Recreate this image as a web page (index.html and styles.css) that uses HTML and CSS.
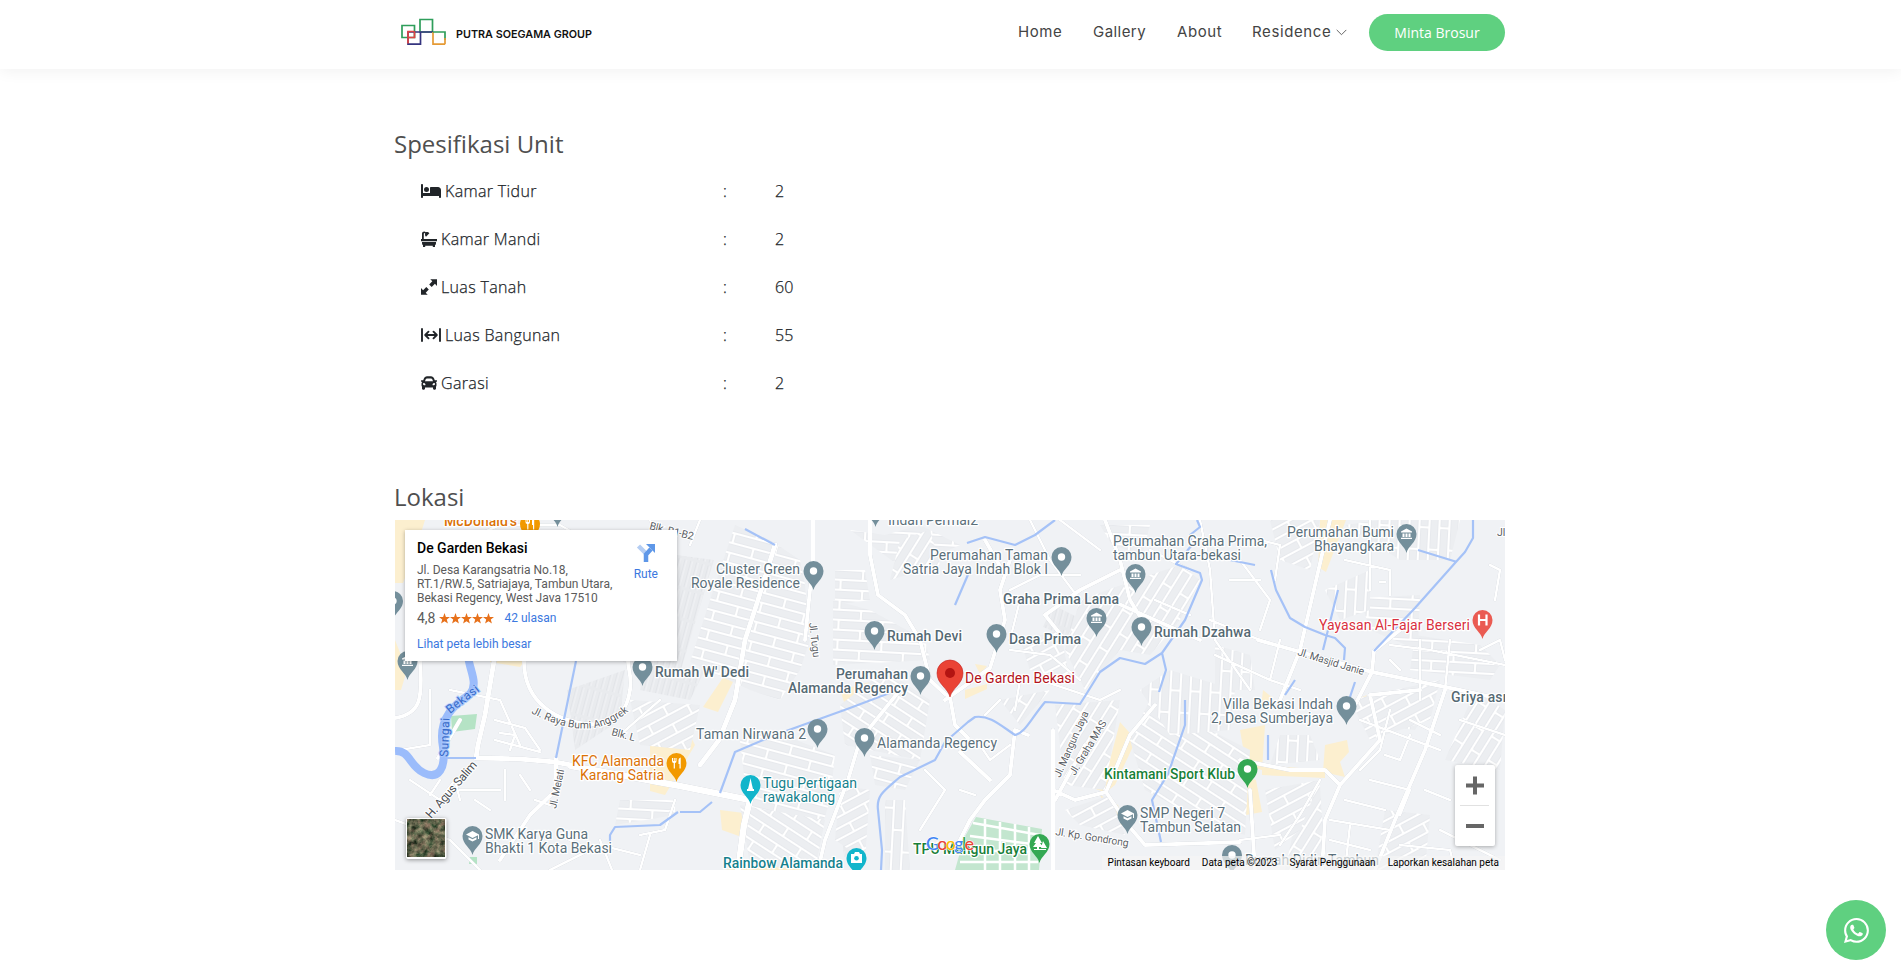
FILE: index.html
```html
<!DOCTYPE html>
<html lang="id">
<head>
<meta charset="utf-8">
<title>Putra Soegama Group</title>
<link rel="stylesheet" href="styles.css">
</head>
<body>
<header class="header">
  <div class="container header-row">
    <a class="logo" href="#">
      <svg width="200" height="40" viewBox="395 12 200 40" fill="none" stroke-width="1.7">
        <path stroke="#2f9e5b" d="M402 25.500h12.500v12H402zM420 19.500h12.500V32H420z"/>
        <path stroke="#35347f" d="M408 32h12.500v12.200H408zM420 32h13"/>
        <path stroke="#e04444" d="M414.500 31.500H408v12M408 37.500h6.500v-6"/>
        <path stroke="#e59a35" d="M433 32v12.200h12"/>
        <path stroke="#2f9e5b" d="M433 32h12v8"/>
        <path stroke="#e59a35" d="M445 38v6.200"/>
        <text class="logo-text" x="456" y="38" textLength="136" lengthAdjust="spacingAndGlyphs">PUTRA SOEGAMA GROUP</text>
      </svg>
    </a>
    <nav class="nav">
      <a href="#" class="nav-home">Home</a>
      <a href="#" class="nav-gallery">Gallery</a>
      <a href="#" class="nav-about">About</a>
      <a href="#" class="nav-res">Residence <svg width="11" height="7" viewBox="0 0 11 7"><path d="M.7.900 5.500 5.700 10.300.900" fill="none" stroke="#666" stroke-width="1"/></svg></a>
      <a href="#" class="button">Minta Brosur</a>
    </nav>
  </div>
</header>
<main class="container">
  <section class="spec">
    <h4>Spesifikasi Unit</h4>
    <div class="row"><span class="name"><svg width="20" height="16" viewBox="0 0 640 512"><path d="M32 32c17.700 0 32 14.300 32 32V320H288V160c0-17.700 14.300-32 32-32H544c53 0 96 43 96 96V448c0 17.700-14.300 32-32 32s-32-14.300-32-32V416H64v32c0 17.700-14.300 32-32 32s-32-14.300-32-32V64C0 46.300 14.300 32 32 32zm144 96a80 80 0 1 1 0 160 80 80 0 1 1 0-160z"/></svg>Kamar Tidur</span><span>:</span><span>2</span></div>
    <div class="row"><span class="name"><svg width="16" height="16" viewBox="0 0 16 16"><path d="M1 8V2.600C1 .400 3.700-.200 4.800 1.200 6.200.700 7.600 1.200 8.400 2.300L5 5.700C4 4.900 3.800 3.700 4.200 2.800 3.800 1.800 2.800 2 2.800 2.800V8zM0 8h16v2.300H0zM1 11h14v1.200c0 .9-.4 1.500-1 2V16h-2.200v-1.200H4.200V16H2v-1.800c-.6-.5-1-1.100-1-2z"/></svg>Kamar Mandi</span><span>:</span><span>2</span></div>
    <div class="row"><span class="name"><svg width="16" height="16" viewBox="0 0 16 16"><path d="M9.300.200H16v6.700l-2.100-2.100-3.200 3.100-2.500-2.500 3.100-3.200zM6.700 15.800H0V9.100l2.100 2.100 3.200-3.100 2.500 2.500-3.100 3.200z"/></svg>Luas Tanah</span><span>:</span><span>60</span></div>
    <div class="row"><span class="name"><svg width="20" height="16" viewBox="0 0 20 16"><path d="M1 2v12M19 2v12M4.500 8h11M7.500 4.700 4.200 8l3.300 3.300M12.500 4.700 15.800 8l-3.300 3.300" fill="none" stroke="#212529" stroke-width="1.900" stroke-linecap="round" stroke-linejoin="round"/></svg>Luas Bangunan</span><span>:</span><span>55</span></div>
    <div class="row"><span class="name"><svg width="16" height="16" viewBox="0 28 512 456" preserveAspectRatio="none"><path d="M499.990 176h-59.870l-16.640-41.600C406.380 91.630 365.570 64 319.500 64h-127c-46.060 0-86.880 27.630-103.990 70.400L71.870 176H12.010C4.200 176-1.530 183.340.370 190.910l6 24C7.700 220.250 12.500 224 18.010 224h20.070C24.650 235.730 16 252.780 16 272v48c0 16.120 6.160 30.670 16 41.930V416c0 17.670 14.330 32 32 32h32c17.670 0 32-14.330 32-32v-32h256v32c0 17.670 14.330 32 32 32h32c17.670 0 32-14.330 32-32v-54.070c9.840-11.250 16-25.800 16-41.930v-48c0-19.220-8.650-36.270-22.070-48H494c5.510 0 10.310-3.750 11.640-9.090l6-24c1.890-7.570-3.840-14.910-11.650-14.910zm-352.060-17.830c7.290-18.220 24.940-30.170 44.570-30.170h127c19.630 0 37.280 11.950 44.570 30.170L384 208H128l19.930-49.830zM96 319.800c-19.200 0-32-12.760-32-31.900S76.800 256 96 256s48 28.710 48 47.850-28.800 15.950-48 15.950zm320 0c-19.200 0-48 3.190-48-15.950S396.800 256 416 256s32 12.760 32 31.900-12.800 31.900-32 31.900z"/></svg>Garasi</span><span>:</span><span>2</span></div>
  </section>
  <section class="location">
    <h4>Lokasi</h4>
    <div class="map">
      <svg class="map-canvas" width="1110" height="350" viewBox="395 520 1110 350">
        <defs>
          <g id="tile">
            <rect width="44" height="20" fill="#eceef1"/>
            <path d="M0 5H44M0 15H44M12 5V15M34 -5V5M34 15V25" stroke="#dcdfe4" stroke-width="3.600" fill="none"/>
            <path d="M0 5H44M0 15H44M12 5V15M34 -5V5M34 15V25" stroke="#fff" stroke-width="2.600" fill="none"/>
          </g>
          <pattern id="p15" width="44" height="20" patternUnits="userSpaceOnUse" patternTransform="rotate(15)"><use href="#tile"/></pattern>
          <pattern id="p0" width="44" height="20" patternUnits="userSpaceOnUse" patternTransform="rotate(3)"><use href="#tile"/></pattern>
          <pattern id="p30" width="44" height="20" patternUnits="userSpaceOnUse" patternTransform="rotate(33)"><use href="#tile"/></pattern>
          <pattern id="p60" width="44" height="20" patternUnits="userSpaceOnUse" patternTransform="rotate(-58)"><use href="#tile"/></pattern>
          <pattern id="p90" width="44" height="20" patternUnits="userSpaceOnUse" patternTransform="rotate(93)"><use href="#tile"/></pattern>
          <pattern id="p25" width="44" height="20" patternUnits="userSpaceOnUse" patternTransform="rotate(-28)"><use href="#tile"/></pattern>
          <pattern id="dense" width="30" height="6" patternUnits="userSpaceOnUse" patternTransform="rotate(-75)"><rect width="30" height="6" fill="#e9ebee"/><path d="M0 3H27" stroke="#dcdee2"/><path d="M0 4H27" stroke="#f5f6f8"/></pattern>
          <path id="drop" d="M0 19C-1.500 12-10 8.500-10 0A10 10 0 1 1 10 0C10 8.500 1.500 12 0 19Z"/>
          <g id="pin"><use href="#drop"/><circle r="3.700" fill="#fff"/></g>
          <g id="museum"><use href="#drop"/><path d="M-5.500-2.500 0-5.500 5.500-2.500V-1.500H-5.500ZM-4-.5H-2V3H-4ZM-1-.5H1V3H-1ZM2-.5H4V3H2ZM-5.500 3.700H5.500V5H-5.500Z" fill="#fff"/></g>
          <g id="school"><use href="#drop"/><path d="M-6.500-1.500 0-5 6.500-1.500V3H5.500V-.8L0 2ZM-4 1.200 0 3.300 4 1.200V3.500L0 5.500-4 3.500Z" fill="#fff"/></g>
          <g id="food"><use href="#drop"/><path d="M-4.500-5V-2Q-4.500 0-2.800 0V5.500H-1.600V0Q0 0 0-2V-5H-1V-2H-1.800V-5H-2.700V-2H-3.500V-5ZM2 5.500V-3Q2-5 4.200-5.500V5.500H3V1H2Z" fill="#fff"/></g>
          <filter id="terrain" x="0" y="0" width="1" height="1" color-interpolation-filters="sRGB"><feTurbulence type="fractalNoise" baseFrequency=".17" numOctaves="4" seed="8"/><feColorMatrix values=".9 0 0 0 -.06 .65 .2 0 0 -.03 .6 .1 0 0 -.05 0 0 0 0 1"/></filter>
        </defs>
        <rect x="395" y="520" width="1110" height="350" fill="#f0f2f5"/>

        <!-- parks and commercial blocks -->
        <path fill="#b5e3c5" d="M451 716 477 714 475 729 452 732ZM470 857h7v7h-8z"/>
        <path fill="#c3e6cf" d="M976 817 1042 829 1039 870H955L964 838Z"/>
        <path fill="#fcefcf" d="M395 520h30l-12 38-10 25H395ZM395 640l12 30-6 20h-6ZM490 655h40l-10 12-30-5ZM720 810 760 815 778 870H755L750 840 722 830ZM725 870 800 850V870ZM650 745l35-20 10 20-30 50-15-4ZM1120 722 1136 740 1115 785 1105 793 1095 788 1110 760ZM1100 795 1118 805 1125 825H1114ZM1085 760 1104 765 1098 790 1080 780ZM1325 745 1347 740 1349 752 1340 762 1345 777 1323 772ZM1240 730 1265 725 1262 770 1246 765ZM1236 775 1256 780 1262 812 1246 815ZM1262 765 1325 770V778L1262 775ZM1320 520h26l-20 52-8-5ZM1263 690l10 8-12 10ZM1355 700l12-5-8 15ZM840 690 885 678 890 688 845 705ZM965 690l22-6v5l-22 10ZM735 660l8 2-25 50-15-5ZM975 664l12 2-7 8Z"/>

        <!-- residential areas -->
        <path fill="url(#dense)" d="M677 555 714 560 690 640 678 680 620 661V530L677 540ZM640 665 705 670 690 700 640 690ZM567 690 625 670 620 720 575 750ZM1053 605l24 12-10 20-24-10ZM840 815l17-3 5 40-18 5Z"/>
        <path fill="url(#p15)" d="M735 525 770 540 800 560 805 585 810 640 800 670 780 700 750 690 690 662 710 600ZM740 740 770 730 835 755 830 800 815 850 750 830ZM870 755 920 760 905 790 875 785Z"/>
        <path fill="url(#p30)" d="M885 670 930 700 920 760 845 745 840 705ZM740 805 825 820 815 870 750 865ZM1130 740 1150 700 1250 750 1245 835 1200 820 1145 790Z"/>
        <path fill="url(#p0)" d="M620 800H675V815L615 825ZM835 570H865L870 600 835 605Z"/>
        <path fill="none" stroke="#fff" stroke-width="2.500" d="M973 823 1040 835M970 836 1040 845M965 850 1030 852M960 862H1038M985 819V870M1000 822V870M1015 824V870M1029 827V870"/>
        <path fill="url(#p0)" d="M833 600 870 610 925 640 930 660 833 665ZM850 530 885 535 920 525 960 545 905 570ZM1360 598 1420 595 1418 650 1370 630ZM1415 635 1480 645 1500 665 1490 680 1410 670ZM1100 525h50l-8 30-30-10Z"/>
        <path fill="url(#p60)" d="M1080 600 1135 580 1180 565 1200 580 1180 620 1150 655 1120 650 1085 690 1065 650ZM1055 705 1120 700 1105 790 1065 785ZM1300 800 1320 785 1325 870H1285ZM1475 690 1505 710 1500 770 1445 760ZM900 540 930 530 940 565 890 580ZM1000 700 1050 690 1020 725Z"/>
        <path fill="url(#p90)" d="M1140 690 1170 670 1235 690 1230 730 1170 735ZM885 800h20l5 70H885ZM1280 735h30l10 25-50 5ZM1325 590 1370 570 1370 610 1340 620ZM1215 645 1250 655 1255 690 1215 690ZM1345 525 1380 520H1460L1450 560H1400ZM1375 700 1430 705 1415 730 1380 725Z"/>
        <path fill="url(#p25)" d="M630 700 700 705 690 750 640 745ZM840 785 870 790 865 860 835 840ZM1385 810 1430 815 1425 870H1375ZM1265 790 1320 780 1300 830 1275 850ZM1350 700 1440 680 1430 720 1370 740ZM1065 810 1110 795 1125 835 1080 825ZM1270 520h50l-10 50-30-10ZM1020 640 1060 630 1070 680 1030 670Z"/>

        <g class="roads">
          <path stroke-width="5" d="M494 661 L485 715 478 745 476 758 520 759 555 762 571 765 M775 545 L758 600 745 640 735 700 719 740 700 765"/>
          <path stroke-width="6.500" d="M571 766 L620 775 680 786 750 800 M750 800 L744 825 738 870"/>
          <path stroke-width="4" d="M395 718C420 714 423 700 420 661 M524 661C524 705 560 722 590 724S628 705 630 690 628 670 628 661 M556 758V790L530 815 500 860 M438 758 460 720 M813 520V560L808 610 805 640 M870 520V555L878 595 905 615 920 640 930 680 945 694 950 697 955 725 968 738 M945 700 990 668 1005 620 1000 590 1010 560 M985 540 1005 575 M1028 735 1015 730 1010 775 985 800 970 820 955 850M960 752 990 780 M1053 730V870M1053 790 1075 800 1106 792 1130 735 1155 705M1106 792 1128 825 1145 845 1240 842 M1085 745 1055 800 M1330 520 1300 650 1280 700M1258 640 1372 672 1460 690 1505 700M1372 672 1355 705 M1445 690 1425 750 1395 820 1375 870 M1374 651 1372 672M1374 651 1400 630M1240 760 1290 770 1325 770 1340 785 1325 820 1322 870M1340 785 1380 740 1370 695 1420 690 M1250 790 1255 870 M900 690 860 740 848 780 825 840 818 870 M1105 520 1120 560 1130 600 1145 625M1120 570 1080 590 1045 615 1065 640M1110 600 1200 640"/>
          <path stroke-width="2.600" d="M400 750 430 745 430 690M410 780 440 800 455 780 460 800M460 790 500 790 M500 700 520 745M495 740 540 752 M450 690 500 700M1000 700 985 715 M395 820 450 840 480 870M1040 680 1100 700 1120 690 M1010 650 1050 655 1080 680M1010 590 1040 575 1080 575M1020 600 1010 640M1030 520 1050 560 1080 600M1060 520 1100 550M1200 520 1210 570 1215 640 1250 690M1240 560 1270 600 1260 630M1210 620 1260 640M1230 580 1260 580M1260 540 1280 545 1275 580M1280 640 1270 680 1300 690M1215 655 1270 680M1370 520V590M1345 560 1390 570V595M1380 582H1385M1490 565 1500 570 1495 600M1390 645 1430 650 1505 665M1420 640V700M1400 670 1390 660 M1450 640 1445 690M1480 650 1500 640 1505 660M1360 720 1440 750 M1390 710 1380 750 1360 770M1370 780 1410 790 1400 815M1425 790 1450 800M1410 735 1400 760 1385 755M1330 840 1370 850M1330 820 1390 830M1280 845 1300 815 1320 780M1240 840 1280 835M960 790 975 795 M980 745 990 760 1010 745M925 770 945 790 920 830M1020 680 1015 710M1150 550 1190 570M1155 600 1190 615M495 720 525 728 540 750M500 733 515 735 510 750M505 770V800M520 775 530 790M535 800 550 805M440 780 430 795M490 810 475 800M620 735 660 700M590 850 560 835M550 870 600 845 640 855M600 840 612 870M650 835 640 870M675 800 665 830 640 835M455 545 500 525 560 525 620 560M700 520 690 545M650 520 670 560M1460 720 1505 735M1440 735 1410 720M1345 800 1385 810M1350 825 1345 870M1400 845 1450 850 1455 870M1440 830 1500 860"/>
        </g>

        <!-- waterways -->
        <g fill="none" stroke="#a5c2f7" stroke-width="2.200" stroke-linejoin="round">
          <path stroke="#9bbcfb" stroke-width="8" d="M395 751C410 750 409 766 424 773S446 768 443 747C437 715 459 702 470 694 479 683 469 670 468 655"/>
          <path d="M447 758H476M576 661 556 758M610 845V835L615 827 660 825 678 812 M680 812H700L712 802M720 793 735 752 775 735 850 708 900 689M745 529 775 545M881 870 882 850 878 810C876 795 885 790 900 777L935 760 945 742 968 722 975 717C990 715 1000 725 1015 735 1025 733 1030 720 1045 702L1080 704 1087 693 1100 672 1120 658 1145 664 1162 653 1185 620 1202 580 1200 573 1176 564 1192 545 1190 535 1200 527 1197 520M1162 653 1166 670 1159 692M967 543 985 537 1015 545 1035 535 1055 520M955 605 970 570M1473 520V538L1465 552 1455 563 1415 608 1374 651M1271 570 1276 590 1290 618 1305 627 1325 635 1335 638 1345 648 1344 660M1338 590 1323 650M1355 682 1349 700M1418 550 1457 562M1210 558 1230 560 1255 565M1185 700V725L1168 774 1152 800 1161 842M1268 735V760M1285 695 1295 680"/>
        </g>

        <!-- street names -->
        <g class="street">
          <text x="649" y="529" transform="rotate(14 649 529)" textLength="45">Blk. B1-B2</text>
          <text x="809" y="623" transform="rotate(83 809 623)" textLength="35">Jl. Tugu</text>
          <path id="anggrek" fill="none" d="M531 713Q580 738 610 723T630 700"/>
          <text><textPath href="#anggrek">Jl. Raya Bumi Anggrek</textPath></text>
          <text x="611" y="735" transform="rotate(15 611 735)" textLength="24">Blk. L</text>
          <text x="556" y="809" transform="rotate(-78 556 809)" textLength="40">Jl. Melati</text>
          <text class="road-big" x="431" y="819" transform="rotate(-49 431 819)" textLength="71">H. Agus Salim</text>
          <text class="water" x="448" y="757" transform="rotate(-88 448 757)" textLength="39">Sungai</text>
          <text class="water" x="450" y="714" transform="rotate(-38 450 714)" textLength="38">Bekasi</text>
          <text x="1060" y="778" transform="rotate(-66 1060 778)" textLength="71">Jl. Mangun Jaya</text>
          <text x="1075" y="776" transform="rotate(-59 1075 776)" textLength="62">Jl. Graha MAS</text>
          <text x="1055" y="835" transform="rotate(9 1055 835)" textLength="74">Jl. Kp. Gondrong</text>
          <text x="1297" y="655" transform="rotate(17 1297 655)" textLength="69">Jl. Masjid Janie</text>
          <text x="1497" y="536">Jl.</text>
        </g>

        <!-- place names -->
        <g class="place">
          <text x="716" y="574" textLength="84">Cluster Green</text><text x="691" y="588" textLength="109">Royale Residence</text>
          <text x="888" y="525" textLength="90">Indah Permai2</text>
          <text x="930" y="560" textLength="118">Perumahan Taman</text><text x="903" y="574" textLength="145">Satria Jaya Indah Blok I</text>
          <text x="1113" y="546" textLength="154">Perumahan Graha Prima,</text><text x="1113" y="560" textLength="128">tambun Utara-bekasi</text>
          <text x="1287" y="537" textLength="107">Perumahan Bumi</text><text x="1314" y="551" textLength="80">Bhayangkara</text>
          <text x="1223" y="709" textLength="110">Villa Bekasi Indah</text><text x="1211" y="723" textLength="122">2, Desa Sumberjaya</text>
          <text x="696" y="739" textLength="110">Taman Nirwana 2</text><text x="877" y="748" textLength="120">Alamanda Regency</text>
          <text x="485" y="839" textLength="103">SMK Karya Guna</text><text x="485" y="853" textLength="127">Bhakti 1 Kota Bekasi</text>
          <text x="1140" y="818" textLength="85">SMP Negeri 7</text><text x="1140" y="832" textLength="101">Tambun Selatan</text>
          <text x="1245" y="865" textLength="134">Rumah Didin Tambun</text>
          <g class="strong"><text x="1003" y="604" textLength="116">Graha Prima Lama</text><text x="887" y="641" textLength="75">Rumah Devi</text><text x="1009" y="644" textLength="72">Dasa Prima</text><text x="1154" y="637" textLength="97">Rumah Dzahwa</text><text x="836" y="679" textLength="72">Perumahan</text><text x="788" y="693" textLength="120">Alamanda Regency</text><text x="655" y="677" textLength="94">Rumah W' Dedi</text><text x="1451" y="702" textLength="72">Griya asri 2</text></g>
          <g class="orange"><text x="572" y="766" textLength="92">KFC Alamanda</text><text x="580" y="780" textLength="84">Karang Satria</text><text class="semi" x="444" y="526" textLength="73">McDonald's</text></g>
          <g class="teal"><text x="763" y="788" textLength="94">Tugu Pertigaan</text><text x="763" y="802" textLength="72">rawakalong</text><text class="semi" x="723" y="868" textLength="120">Rainbow Alamanda</text></g>
          <g class="green"><text x="1104" y="779" textLength="131">Kintamani Sport Klub</text><text x="913" y="854" textLength="114">TPU Mangun Jaya</text></g>
          <text class="red" x="1319" y="630" textLength="151">Yayasan Al-Fajar Berseri</text>
          <text class="main-label" x="965" y="683" textLength="110">De Garden Bekasi</text>
        </g>

        <!-- markers -->
        <g fill="#748f9b" stroke-width="0">
          <use href="#pin" x="813.500" y="571"/><use href="#pin" x="874.500" y="631"/><use href="#pin" x="920.500" y="676"/><use href="#pin" x="996.500" y="634"/><use href="#pin" x="1061.500" y="557"/><use href="#museum" x="1135.500" y="574"/><use href="#museum" x="1096.500" y="618"/><use href="#pin" x="1141.500" y="627"/><use href="#museum" x="1406.500" y="534"/><use href="#pin" x="1346.500" y="706"/><use href="#pin" x="817.500" y="729"/><use href="#pin" x="864.500" y="738"/><use href="#pin" x="642.500" y="667"/><use href="#school" x="1127.500" y="815"/><use href="#pin" x="1232" y="855"/><use href="#school" x="472.500" y="836"/><use href="#museum" x="407.500" y="661"/><use href="#pin" x="393" y="601"/><use href="#pin" x="557.500" y="508"/><use href="#pin" x="875.500" y="508"/>
        </g>
        <g fill="#f29900"><use href="#food" x="676.500" y="763"/><use href="#food" x="530" y="524"/></g>
        <g fill="#12b5cb"><use href="#drop" x="750.500" y="785"/><use href="#drop" x="856.500" y="858"/></g>
        <path fill="#fff" d="M750.500 778 752 785 753 789H748L749 785ZM747 789H754V791H747ZM851 854H854L855 852H859L860 854H862V863H851Z"/><circle cx="856.500" cy="858.300" r="2.300" fill="#12b5cb"/>
        <g fill="#34a853"><use href="#pin" x="1247.500" y="769"/><use href="#drop" x="1039.500" y="844"/></g>
        <path fill="#fff" d="M1038 836 1042 843H1040L1043 847H1033L1036 843H1034ZM1037 847H1039V850H1037ZM1043 841 1047 848H1041ZM1034 849H1046V850H1034Z"/>
        <g fill="#ea5b52"><use href="#drop" x="1482.500" y="620"/></g>
        <path stroke="#fff" stroke-width="2.200" d="M1479 614.500V625.500M1486.500 614.500V625.500M1479 620H1486.500"/>
        <path fill="#ea4335" stroke="#c5221f" stroke-width=".6" d="M950 697C948 688 937 684 937 673A13 13 0 1 1 963 673C963 684 952 688 950 697Z"/><circle cx="950" cy="673" r="5" fill="#b31412"/>

        <text class="google" x="926" y="849.500" textLength="48"><tspan fill="#4285f4">G</tspan><tspan fill="#ea4335">o</tspan><tspan fill="#fbbc04">o</tspan><tspan fill="#4285f4">g</tspan><tspan fill="#34a853">l</tspan><tspan fill="#ea4335">e</tspan></text>
        <rect class="thumb" x="406" y="818" width="40.500" height="41" rx="2" fill="#fff"/>
        <rect x="407.500" y="819.500" width="37.500" height="37.500" filter="url(#terrain)"/>
      </svg>
      <div class="card">
        <div class="card-main">
          <strong>De Garden Bekasi</strong>
          <p>Jl. Desa Karangsatria No.18,<br>RT.1/RW.5, Satriajaya, Tambun Utara,<br>Bekasi Regency, West Java 17510</p>
          <div class="rating"><span>4,8</span><svg width="55" height="11" viewBox="0 0 55 11" fill="#e7711b"><defs><path id="star" d="M5.500 0 6.900 3.900 11 4 7.800 6.500 8.900 10.500 5.500 8.200 2.100 10.500 3.200 6.500 0 4 4.100 3.900Z"/></defs><use href="#star"/><use href="#star" x="11"/><use href="#star" x="22"/><use href="#star" x="33"/><use href="#star" x="44"/></svg><a href="#">42 ulasan</a></div>
          <a class="larger" href="#">Lihat peta lebih besar</a>
        </div>
        <a class="route" href="#"><svg width="22" height="22" viewBox="0 0 22 22"><path d="M3.500 4 10.500 11" stroke="#b4cdf3" stroke-width="4.500"/><path d="M11 20V12.500L16 7" fill="none" stroke="#5e97e8" stroke-width="4.500"/><path fill="#5e97e8" d="M11 2H20V11Z"/></svg>Rute</a>
      </div>
      <div class="zoom"><svg width="40" height="81" viewBox="0 0 40 81"><path d="M11 20.500H29M20 11.500V29.500M11 61H29" stroke="#666" stroke-width="4"/><path d="M5 40.500H34" stroke="#e1e1e1"/></svg></div>
      <div class="terms"><span>Pintasan keyboard</span><span>Data peta ©2023</span><span>Syarat Penggunaan</span><span>Laporkan kesalahan peta</span></div>
    </div>
  </section>
</main>
<a class="whatsapp" href="#"><svg width="25" height="25" viewBox="0 0 16 16" fill="#fff"><path d="M13.601 2.326A7.854 7.854 0 0 0 7.994 0C3.627 0 .068 3.558.064 7.926c0 1.399.366 2.760 1.057 3.965L0 16l4.204-1.102a7.933 7.933 0 0 0 3.790.965h.004c4.368 0 7.926-3.558 7.930-7.930A7.898 7.898 0 0 0 13.600 2.326zM7.994 14.521a6.573 6.573 0 0 1-3.356-.920l-.240-.144-2.494.654.666-2.433-.156-.251a6.560 6.560 0 0 1-1.007-3.505c0-3.626 2.957-6.584 6.591-6.584a6.560 6.560 0 0 1 4.660 1.931 6.557 6.557 0 0 1 1.928 4.660c-.004 3.639-2.961 6.592-6.592 6.592zm3.615-4.934c-.197-.099-1.170-.578-1.353-.646-.182-.065-.315-.099-.445.099-.133.197-.513.646-.627.775-.114.133-.232.148-.430.050-.197-.100-.836-.308-1.592-.985-.590-.525-.985-1.175-1.103-1.372-.114-.198-.011-.304.088-.403.087-.088.197-.232.296-.346.100-.114.133-.198.198-.330.065-.134.034-.248-.015-.347-.050-.099-.445-1.076-.612-1.470-.160-.389-.323-.335-.445-.340-.114-.007-.247-.007-.380-.007a.729.729 0 0 0-.529.247c-.182.198-.691.677-.691 1.654 0 .977.710 1.916.810 2.049.098.133 1.394 2.132 3.383 2.992.470.205.840.326 1.129.418.475.152.904.129 1.246.080.380-.058 1.171-.480 1.338-.943.164-.464.164-.860.114-.943-.049-.084-.182-.133-.380-.232z"/></svg></a>
</body>
</html>
```
FILE: styles.css
```css
* { box-sizing: border-box; }
body { margin: 0; background: #fff; color: #212529; font: 300 16px/24px "Open Sans", sans-serif; min-height: 971px; overflow: hidden; }
a { color: inherit; text-decoration: none; }
.container { width: 1110px; margin: 0 auto 0 395px; }
.header { height: 69px; background: #fff; box-shadow: 0 2px 15px rgba(0, 0, 0, .06); }
.header-row { display: flex; justify-content: space-between; align-items: flex-start; }
.logo { margin-top: 12px; height: 40px; }
.logo-text { font: 600 11px Inter, sans-serif; fill: #111; stroke: none; }
.nav { display: flex; align-items: center; margin-top: 14px; height: 37px; font: 400 15px/24px Inter, sans-serif; color: #444; }
.nav > a { position: relative; top: -1px; white-space: nowrap; }
.nav-home { width: 75px; letter-spacing: .55px; }
.nav-gallery { width: 84px; letter-spacing: .45px; }
.nav-about { width: 75px; letter-spacing: .6px; }
.nav-res { width: 117px; letter-spacing: .6px; }
.nav-res svg { vertical-align: 1px; }
.nav > .button { top: 0; display: grid; place-items: center; width: 136px; height: 37px; border-radius: 19px; background: #5fd080; color: #fff; font: 400 14px "Open Sans", sans-serif; }
h4 { margin: 0 0 0 -1px; font-size: 24px; line-height: 29px; font-weight: 400; color: #4f4f4f; }
.spec { padding-top: 60px; }
.spec h4 { margin-bottom: 9px; }
.row { display: grid; grid-template-columns: 302px 52px 100px; align-items: start; height: 48px; padding: 12px 0 0 26px; -webkit-text-stroke: .25px #212529; }
.name { display: flex; align-items: center; gap: 4px; letter-spacing: .35px; }
.name svg { flex: none; fill: #212529; }
.location { padding-top: 75px; }
.location h4 { margin-bottom: 9px; }
.map { position: relative; width: 1110px; height: 350px; overflow: hidden; font-family: Roboto, sans-serif; font-weight: 400; }
.map-canvas { display: block; }
.roads { fill: none; stroke: #fff; stroke-linejoin: round; stroke-linecap: round; filter: drop-shadow(0 0 .7px #b9bfc8); }
.place text { font: 400 14px Roboto, sans-serif; fill: #5b707b; stroke: #fff; stroke-width: 2.500px; stroke-linejoin: round; paint-order: stroke; }
.place .strong text { font-weight: 500; fill: #566a74; }
.place .semi, .place .green text { font-weight: 500; }
.place .orange text { fill: #db7207; }
.place .teal text { fill: #16818d; }
.place .green text { fill: #188038; }
.place .red { fill: #d93040; }
.place .main-label { fill: #b3141c; }
.street text { font: 400 10.500px Roboto, sans-serif; fill: #5c6166; stroke: #fff; stroke-width: 2px; paint-order: stroke; }
.street .road-big { font-size: 12px; fill: #4c5055; }
.street .water { font-size: 12px; fill: #3569c9; stroke: #a8c6fb; }
.google { font: 500 18px Lato, sans-serif; stroke: #fff; stroke-width: 1px; paint-order: stroke; }
.thumb { filter: drop-shadow(0 1px 2px rgba(0, 0, 0, .4)); }
.card { position: absolute; left: 10px; top: 10px; width: 272px; height: 131px; padding: 9px 12px; display: flex; justify-content: space-between; background: #fff; box-shadow: 0 1px 4px rgba(0, 0, 0, .3); font-size: 12px; line-height: 14px; color: #5b5b5b; }
.card a { color: #3b78e0; }
.card-main { white-space: nowrap; }
.card strong { display: block; font-size: 14px; line-height: 19px; font-weight: 500; color: #000; }
.card p { margin: 5px 0 0; }
.rating { display: flex; align-items: center; gap: 3px; margin-top: 5px; height: 16px; }
.rating span { font-size: 14px; }
.rating a { margin-left: 8px; }
.larger { display: block; margin-top: 11px; }
.route { display: flex; flex-direction: column; align-items: center; padding: 3px 7px 0 0; gap: 3px; }
.zoom { position: absolute; left: 1060px; top: 245px; width: 40px; height: 81px; background: #fff; border-radius: 2px; box-shadow: 0 1px 4px rgba(0, 0, 0, .3); }
.terms { position: absolute; right: 0; bottom: 0; height: 14px; display: flex; gap: 12px; padding: 0 6px; background: rgba(245, 245, 245, .7); font-size: 10px; line-height: 14px; color: #000; white-space: nowrap; }
.whatsapp { position: fixed; left: 1826px; top: 900px; width: 60px; height: 60px; border-radius: 50%; display: grid; place-items: center; background: #5fd080; }
```
